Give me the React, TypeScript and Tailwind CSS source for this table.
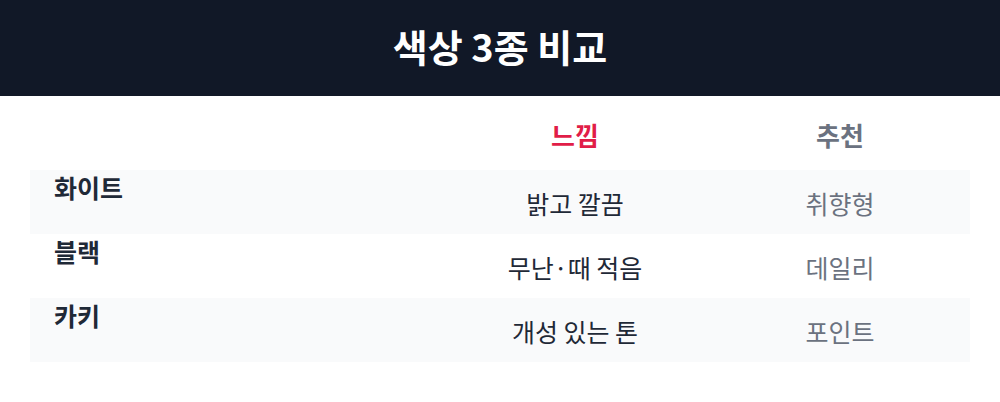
const rows = [
  { name: "화이트", feel: "밝고 깔끔", pick: "취향형" },
  { name: "블랙", feel: "무난·때 적음", pick: "데일리" },
  { name: "카키", feel: "개성 있는 톤", pick: "포인트" },
];

export default function App() {
  return (
    <div className="min-h-[402px] bg-white font-['Noto_Sans_CJK_KR',sans-serif]">
      <header className="flex h-[96px] items-center justify-center bg-[#111827] pb-[4px]">
        <h1 className="text-[38px] font-bold leading-none text-white">색상 3종 비교</h1>
      </header>

      <div className="px-[30px] pt-[4px]">
        <table className="w-full table-fixed border-collapse">
          <colgroup>
            <col className="w-[410px]" />
            <col className="w-[270px]" />
            <col className="w-[260px]" />
          </colgroup>
          <thead>
            <tr className="h-[70px]">
              <th />
              <th className="text-center align-middle text-[26px] font-bold leading-none text-[#e11d48]">느낌</th>
              <th className="text-center align-middle text-[26px] font-bold leading-none text-[#6b7280]">추천</th>
            </tr>
          </thead>
          <tbody>
            {rows.map((row, i) => (
              <tr key={row.name} className={i % 2 === 0 ? "h-[64px] bg-[#f9fafb]" : "h-[64px] bg-white"}>
                <th className="pl-[24px] pt-[5px] text-left align-top text-[25px] font-bold leading-none text-[#1f2937]">
                  {row.name}
                </th>
                <td className="pt-[2px] text-center align-middle text-[25px] leading-none text-[#1f2937]">{row.feel}</td>
                <td className="pt-[2px] text-center align-middle text-[25px] leading-none text-[#6b7280]">{row.pick}</td>
              </tr>
            ))}
          </tbody>
        </table>
      </div>
    </div>
  );
}
